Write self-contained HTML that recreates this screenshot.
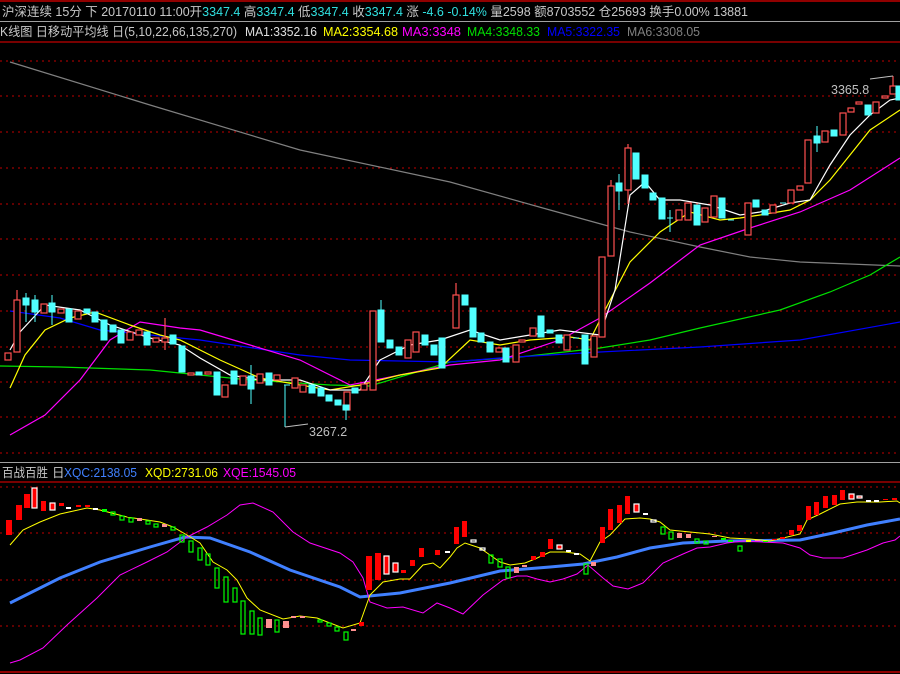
<!DOCTYPE html>
<html><head><meta charset="utf-8"><style>
html,body{margin:0;padding:0;background:#000;width:900px;height:674px;overflow:hidden}
svg{display:block}
text{font-family:"Liberation Sans","Noto Sans CJK SC",sans-serif;font-size:12.5px}
</style></head><body>
<svg width="900" height="674" viewBox="0 0 900 674" xmlns="http://www.w3.org/2000/svg">
<rect width="900" height="674" fill="#000"/>
<line x1="0" y1="1" x2="900" y2="1" stroke="#c00000" stroke-width="1.5"/>
<line x1="0" y1="21.5" x2="900" y2="21.5" stroke="#a0a0a0"/>
<line x1="0" y1="42" x2="900" y2="42" stroke="#c00000" stroke-width="1.2"/>
<line x1="0" y1="462.5" x2="900" y2="462.5" stroke="#a0a0a0"/>
<line x1="0" y1="482" x2="900" y2="482" stroke="#c00000" stroke-width="1.2"/>
<line x1="0" y1="672" x2="900" y2="672" stroke="#c00000" stroke-width="1.5"/>
<text x="2" y="16" fill="#c8c8c8" textLength="746" lengthAdjust="spacingAndGlyphs">沪深连续 15分 下 20170110 11:00开<tspan fill="#30e0e0">3347.4</tspan> 高<tspan fill="#30e0e0">3347.4</tspan> 低<tspan fill="#30e0e0">3347.4</tspan> 收<tspan fill="#30e0e0">3347.4</tspan> 涨 <tspan fill="#30e0e0">-4.6 -0.14%</tspan> 量2598 额8703552 仓25693 换手0.00% 13881</text>
<text x="0" y="36" fill="#c8c8c8" textLength="237" lengthAdjust="spacingAndGlyphs">K线图 日移动平均线 日(5,10,22,66,135,270)</text>
<text x="245" y="36" fill="#e0e0e0" textLength="72" lengthAdjust="spacingAndGlyphs">MA1:3352.16</text>
<text x="323" y="36" fill="#ffff00" textLength="75" lengthAdjust="spacingAndGlyphs">MA2:3354.68</text>
<text x="402" y="36" fill="#ff00ff" textLength="59" lengthAdjust="spacingAndGlyphs">MA3:3348</text>
<text x="467" y="36" fill="#00e000" textLength="73" lengthAdjust="spacingAndGlyphs">MA4:3348.33</text>
<text x="547" y="36" fill="#0000ff" textLength="73" lengthAdjust="spacingAndGlyphs">MA5:3322.35</text>
<text x="627" y="36" fill="#808080" textLength="73" lengthAdjust="spacingAndGlyphs">MA6:3308.05</text>
<text x="2" y="477" fill="#c8c8c8" textLength="46" lengthAdjust="spacingAndGlyphs">百战百胜</text>
<text x="52" y="477" fill="#c8c8c8">日</text>
<text x="64" y="477" fill="#4080ff" textLength="73" lengthAdjust="spacingAndGlyphs">XQC:2138.05</text>
<text x="145" y="477" fill="#ffff00" textLength="73" lengthAdjust="spacingAndGlyphs">XQD:2731.06</text>
<text x="223" y="477" fill="#ff00ff" textLength="73" lengthAdjust="spacingAndGlyphs">XQE:1545.05</text>
<g stroke="#c00000" stroke-dasharray="2,4" stroke-width="1">
<line x1="0" y1="61" x2="900" y2="61"/><line x1="0" y1="96" x2="900" y2="96"/>
<line x1="0" y1="132" x2="900" y2="132"/><line x1="0" y1="168" x2="900" y2="168"/>
<line x1="0" y1="204" x2="900" y2="204"/><line x1="0" y1="239" x2="900" y2="239"/>
<line x1="0" y1="275" x2="900" y2="275"/><line x1="0" y1="311" x2="900" y2="311"/>
<line x1="0" y1="347" x2="900" y2="347"/><line x1="0" y1="382" x2="900" y2="382"/>
<line x1="0" y1="417" x2="900" y2="417"/><line x1="0" y1="453" x2="900" y2="453"/>
<line x1="0" y1="487" x2="900" y2="487"/><line x1="0" y1="533" x2="900" y2="533"/>
<line x1="0" y1="580" x2="900" y2="580"/><line x1="0" y1="626" x2="900" y2="626"/>
</g>
<g fill="none" stroke-width="1.2">
<polyline stroke="#808080" points="10,62 150,105 300,150 450,182 550,210 630,232 700,247 750,257 800,262 900,266"/>
<polyline stroke="#00e000" points="0,366 60,367 150,370 200,375 250,380 330,385 370,386 450,362 520,357 600,348 650,340 700,328 780,310 830,292 870,275 900,257"/>
<polyline stroke="#0000ff" points="10,311 60,318 100,330 200,340 300,355 350,360 450,362 500,358 600,352 700,347 800,340 900,322"/>
<polyline stroke="#ff00ff" points="10,435 45,415 80,380 110,340 140,322 180,328 200,330 250,345 300,360 350,385 400,375 450,365 500,360 560,340 600,318 650,283 700,245 750,228 800,212 850,190 900,158"/>
<polyline stroke="#ffff00" points="10,388 25,355 45,330 70,318 95,312 130,325 160,335 180,340 220,360 260,378 300,385 330,390 360,385 400,375 440,368 470,340 500,345 530,340 570,337 590,340 605,310 630,262 660,232 690,212 720,220 740,218 760,215 790,210 810,200 830,180 850,155 870,130 900,110"/>
<polyline stroke="#ffffff" points="10,350 20,332 45,305 80,310 110,325 150,338 180,345 200,358 230,375 260,380 300,380 330,390 360,390 380,360 410,345 440,340 470,330 500,340 530,335 560,330 600,335 615,290 630,195 645,182 660,200 680,200 710,205 740,215 760,212 790,203 810,200 830,165 850,135 870,115 890,100 900,98"/>
</g>
<g fill="#000" stroke="#ff5050" stroke-width="1.2">
<rect x="5" y="353" width="6" height="7"/>
<rect x="14" y="300" width="6" height="52"/><line x1="17" y1="290" x2="17" y2="300"/>
<rect x="41" y="304" width="6" height="9"/>
<rect x="58" y="309" width="6" height="4"/>
<rect x="75" y="311" width="6" height="8"/>
<rect x="127" y="332" width="6" height="8"/>
<rect x="136" y="330" width="6" height="5"/>
<rect x="153" y="338" width="6" height="4"/><line x1="165" y1="318" x2="165" y2="350"/>
<rect x="162" y="338" width="6" height="4"/>
<rect x="188" y="373" width="6" height="2"/>
<rect x="205" y="372" width="6" height="2"/>
<rect x="222" y="385" width="6" height="12"/>
<rect x="240" y="376" width="6" height="9"/>
<rect x="257" y="374" width="6" height="9"/>
<rect x="274" y="375" width="6" height="5"/>
<rect x="292" y="378" width="6" height="10"/>
<rect x="300" y="385" width="6" height="7"/>
<rect x="344" y="392" width="6" height="18"/>
<rect x="361" y="384" width="6" height="6"/>
<rect x="370" y="311" width="6" height="79"/>
<rect x="405" y="340" width="6" height="18"/>
<rect x="413" y="332" width="6" height="20"/>
<rect x="453" y="295" width="6" height="33"/><line x1="456" y1="283" x2="456" y2="295"/>
<rect x="496" y="348" width="6" height="4"/>
<rect x="513" y="345" width="6" height="17"/>
<rect x="519" y="340" width="6" height="2"/>
<rect x="530" y="328" width="6" height="8"/>
<rect x="564" y="335" width="6" height="15"/>
<rect x="591" y="336" width="6" height="21"/>
<rect x="599" y="257" width="6" height="80"/>
<rect x="608" y="186" width="6" height="70"/><line x1="611" y1="180" x2="611" y2="186"/>
<rect x="625" y="148" width="6" height="42"/><line x1="628" y1="144" x2="628" y2="148"/><line x1="628" y1="190" x2="628" y2="204"/>
<rect x="676" y="210" width="6" height="10"/>
<rect x="685" y="203" width="6" height="17"/>
<rect x="702" y="208" width="6" height="14"/>
<rect x="711" y="196" width="6" height="21"/>
<rect x="745" y="203" width="6" height="32"/>
<rect x="770" y="205" width="6" height="8"/>
<rect x="788" y="190" width="6" height="13"/>
<rect x="797" y="186" width="6" height="4"/>
<rect x="805" y="140" width="6" height="43"/>
<rect x="822" y="131" width="6" height="11"/>
<rect x="840" y="113" width="6" height="22"/>
<rect x="848" y="108" width="6" height="4"/>
<rect x="856" y="102" width="6" height="2"/>
<rect x="873" y="102" width="6" height="11"/>
<rect x="882" y="96" width="6" height="2"/>
<rect x="890" y="86" width="6" height="8"/><line x1="893" y1="76" x2="893" y2="86"/>
</g>
<g fill="#50ffff" stroke="#50ffff" stroke-width="1">
<rect x="23" y="298" width="6" height="7"/><line x1="26" y1="293" x2="26" y2="322"/>
<rect x="32" y="300" width="6" height="12"/><line x1="35" y1="295" x2="35" y2="322"/>
<rect x="49" y="303" width="6" height="9"/><line x1="52" y1="295" x2="52" y2="325"/>
<rect x="66" y="309" width="6" height="13"/>
<rect x="84" y="309" width="6" height="4"/>
<rect x="92" y="312" width="6" height="10"/>
<rect x="101" y="320" width="6" height="20"/>
<rect x="110" y="325" width="6" height="7"/>
<rect x="118" y="330" width="6" height="13"/>
<rect x="144" y="332" width="6" height="13"/>
<rect x="170" y="335" width="6" height="9"/>
<rect x="179" y="346" width="6" height="26"/>
<rect x="196" y="372" width="6" height="3"/>
<rect x="214" y="372" width="6" height="23"/>
<rect x="231" y="371" width="6" height="13"/>
<rect x="248" y="376" width="6" height="13"/><line x1="251" y1="365" x2="251" y2="404"/>
<rect x="266" y="373" width="6" height="12"/>
<line x1="284" y1="385" x2="290" y2="385"/><line x1="285" y1="385" x2="285" y2="427"/>
<rect x="309" y="385" width="6" height="8"/>
<rect x="318" y="388" width="6" height="8"/>
<rect x="326" y="395" width="6" height="6"/>
<rect x="335" y="400" width="6" height="5"/>
<rect x="343" y="405" width="6" height="5"/><line x1="346" y1="405" x2="346" y2="420"/>
<rect x="352" y="388" width="6" height="5"/>
<rect x="378" y="310" width="6" height="32"/><line x1="381" y1="300" x2="381" y2="310"/>
<rect x="387" y="340" width="6" height="8"/>
<rect x="396" y="347" width="6" height="8"/>
<rect x="422" y="335" width="6" height="10"/>
<rect x="431" y="345" width="6" height="10"/>
<rect x="439" y="338" width="6" height="30"/>
<rect x="462" y="295" width="6" height="10"/>
<rect x="470" y="308" width="6" height="29"/>
<rect x="478" y="333" width="6" height="9"/>
<rect x="487" y="342" width="6" height="10"/>
<rect x="503" y="348" width="6" height="14"/>
<rect x="538" y="316" width="6" height="21"/>
<rect x="547" y="330" width="6" height="3"/>
<rect x="556" y="335" width="6" height="8"/>
<line x1="573" y1="338" x2="579" y2="338"/>
<rect x="582" y="335" width="6" height="29"/>
<rect x="616" y="183" width="6" height="8"/><line x1="619" y1="174" x2="619" y2="210"/>
<rect x="633" y="153" width="6" height="26"/>
<rect x="642" y="175" width="6" height="13"/>
<rect x="650" y="193" width="6" height="7"/>
<rect x="659" y="198" width="6" height="21"/>
<line x1="667" y1="218" x2="673" y2="218"/><line x1="670" y1="210" x2="670" y2="232"/>
<rect x="694" y="205" width="6" height="20"/>
<rect x="719" y="198" width="6" height="20"/>
<line x1="728" y1="220" x2="734" y2="220"/>
<rect x="753" y="200" width="6" height="7"/>
<rect x="762" y="210" width="6" height="5"/>
<line x1="780" y1="203" x2="786" y2="203"/>
<rect x="814" y="136" width="6" height="7"/><line x1="817" y1="126" x2="817" y2="152"/>
<rect x="831" y="130" width="6" height="6"/>
<rect x="865" y="105" width="6" height="10"/>
<rect x="896" y="86" width="6" height="14"/>
</g>
<polyline points="285,427 308,424" stroke="#c0c0c0" fill="none"/>
<text x="309" y="436" fill="#c0c0c0">3267.2</text>
<polyline points="870,79 893,76" stroke="#c0c0c0" fill="none"/>
<text x="831" y="94" fill="#c0c0c0">3365.8</text>
<polyline fill="none" stroke="#4080ff" stroke-width="3" points="10,603 60,578 100,562 150,547 185,537 210,538 250,552 290,570 340,587 360,597 400,593 450,583 500,571 550,567 583,564 617,557 650,548 683,543 727,541 800,540 833,533 867,525 900,519"/>
<polyline fill="none" stroke="#ff00ff" stroke-width="1" points="10,663 20,660 43,648 67,625 97,598 120,575 147,562 167,552 187,537 207,527 227,515 240,505 253,503 273,512 293,532 310,543 340,553 353,562 363,578 370,602 387,608 403,607 423,613 437,603 450,608 463,614 483,595 503,580 517,576 527,576 537,579 550,582 563,579 577,574 588,565 603,578 613,586 628,589 643,583 663,563 683,554 697,548 710,547 727,543 743,541 783,543 800,548 810,555 823,558 843,558 867,550 883,543 895,540 900,536"/>
<polyline fill="none" stroke="#ffff00" stroke-width="1" points="10,545 23,530 40,522 60,514 87,508 100,510 127,517 160,522 173,527 187,535 200,543 213,562 227,570 237,580 247,598 260,610 283,619 300,616 317,618 343,628 360,623 370,595 383,582 400,579 410,579 423,565 433,563 440,568 450,557 457,548 465,543 480,548 490,555 500,562 510,565 525,563 535,559 550,552 565,552 580,554 590,561 600,542 610,535 625,519 640,518 650,519 660,522 670,530 690,532 710,534 730,538 750,539 770,541 783,538 800,534 807,520 820,514 840,504 857,502 880,502 897,501 900,503"/>
<g fill="#ff0000">
<rect x="6" y="520" width="6" height="15"/><rect x="16" y="505" width="6" height="15"/><rect x="24" y="494" width="6" height="14"/>
<rect x="41" y="501" width="5" height="10"/><rect x="59" y="503" width="5" height="3"/><rect x="76" y="505" width="5" height="2"/><rect x="85" y="505" width="5" height="2"/>
<rect x="359" y="622" width="5" height="4"/><rect x="366" y="556" width="6" height="34"/><rect x="375" y="553" width="6" height="27"/>
<rect x="401" y="570" width="5" height="3"/><rect x="410" y="560" width="5" height="6"/><rect x="419" y="548" width="5" height="9"/><rect x="435" y="550" width="5" height="5"/>
<rect x="454" y="527" width="5" height="17"/><rect x="462" y="521" width="5" height="16"/>
<rect x="531" y="556" width="5" height="4"/><rect x="540" y="552" width="5" height="5"/><rect x="548" y="539" width="5" height="10"/>
<rect x="600" y="527" width="5" height="16"/><rect x="608" y="509" width="5" height="21"/><rect x="617" y="505" width="5" height="18"/><rect x="625" y="496" width="5" height="18"/>
<rect x="772" y="539" width="5" height="1"/><rect x="780" y="537" width="5" height="2"/><rect x="789" y="530" width="5" height="5"/><rect x="797" y="525" width="5" height="6"/>
<rect x="806" y="506" width="5" height="14"/><rect x="814" y="502" width="5" height="13"/><rect x="823" y="496" width="5" height="12"/><rect x="832" y="495" width="5" height="10"/><rect x="840" y="490" width="5" height="10"/>
<rect x="883" y="499" width="5" height="1"/><rect x="892" y="498" width="5" height="2"/>
</g>
<g fill="#ff0000" stroke="#ffffff" stroke-width="1.2">
<rect x="32" y="488" width="5" height="20"/><rect x="50" y="503" width="5" height="7"/>
<rect x="384" y="556" width="5" height="18"/><rect x="393" y="563" width="5" height="9"/>
<rect x="557" y="545" width="5" height="4"/><rect x="634" y="504" width="5" height="8"/>
<rect x="849" y="494" width="5" height="5"/><rect x="857" y="496" width="5" height="2"/>
</g>
<g fill="#ffffff">
<rect x="66" y="507" width="5" height="2"/><rect x="93" y="508" width="5" height="2"/>
<rect x="445" y="551" width="5" height="2"/>
<rect x="566" y="550" width="5" height="2"/><rect x="574" y="553" width="5" height="2"/><rect x="643" y="513" width="5" height="2"/>
<rect x="866" y="500" width="5" height="2"/><rect x="874" y="500" width="5" height="2"/>
</g>
<g fill="none" stroke="#ffffff" stroke-width="1.2">
<rect x="471" y="540" width="5" height="2"/><rect x="480" y="548" width="5" height="2"/><rect x="651" y="520" width="5" height="2"/>
</g>
<g fill="#ff9090">
<rect x="137" y="518" width="5" height="3"/><rect x="162" y="524" width="5" height="3"/><rect x="266" y="619" width="6" height="9"/>
<rect x="283" y="621" width="6" height="7"/><rect x="291" y="616" width="5" height="2"/><rect x="300" y="616" width="5" height="2"/><rect x="351" y="629" width="5" height="2"/>
<rect x="514" y="567" width="5" height="6"/><rect x="522" y="565" width="5" height="2"/><rect x="591" y="562" width="5" height="4"/>
<rect x="677" y="533" width="5" height="5"/><rect x="686" y="534" width="5" height="4"/><rect x="712" y="536" width="5" height="1"/><rect x="755" y="540" width="5" height="1"/>
</g>
<rect x="746" y="540" width="5" height="2" fill="#ffff00"/>
<g fill="#00ff00"><rect x="102" y="509" width="5" height="3"/><rect x="721" y="538" width="5" height="2"/><rect x="728" y="540" width="5" height="2"/><rect x="763" y="541" width="5" height="1"/></g>
<g fill="none" stroke="#00ff00" stroke-width="1.2">
<rect x="111" y="512" width="4" height="3"/><rect x="120" y="516" width="4" height="4"/><rect x="129" y="518" width="4" height="4"/><rect x="146" y="521" width="4" height="3"/>
<rect x="154" y="524" width="4" height="3"/><rect x="171" y="527" width="4" height="3"/><rect x="180" y="535" width="4" height="7"/><rect x="189" y="541" width="4" height="11"/>
<rect x="198" y="548" width="4" height="12"/><rect x="206" y="554" width="4" height="11"/><rect x="215" y="568" width="4" height="20"/><rect x="224" y="577" width="4" height="25"/>
<rect x="233" y="588" width="4" height="14"/><rect x="241" y="601" width="4" height="33"/><rect x="250" y="611" width="4" height="23"/><rect x="258" y="618" width="4" height="17"/>
<rect x="275" y="620" width="4" height="12"/><rect x="318" y="620" width="4" height="2"/><rect x="327" y="623" width="4" height="3"/><rect x="335" y="627" width="4" height="4"/><rect x="344" y="632" width="4" height="8"/>
<rect x="489" y="555" width="4" height="8"/><rect x="498" y="559" width="4" height="8"/><rect x="506" y="567" width="4" height="11"/>
<rect x="584" y="564" width="4" height="10"/><rect x="661" y="527" width="4" height="7"/><rect x="669" y="532" width="4" height="7"/>
<rect x="695" y="539" width="4" height="4"/><rect x="704" y="541" width="4" height="3"/><rect x="738" y="546" width="4" height="5"/>
</g>
</svg>
</body></html>
